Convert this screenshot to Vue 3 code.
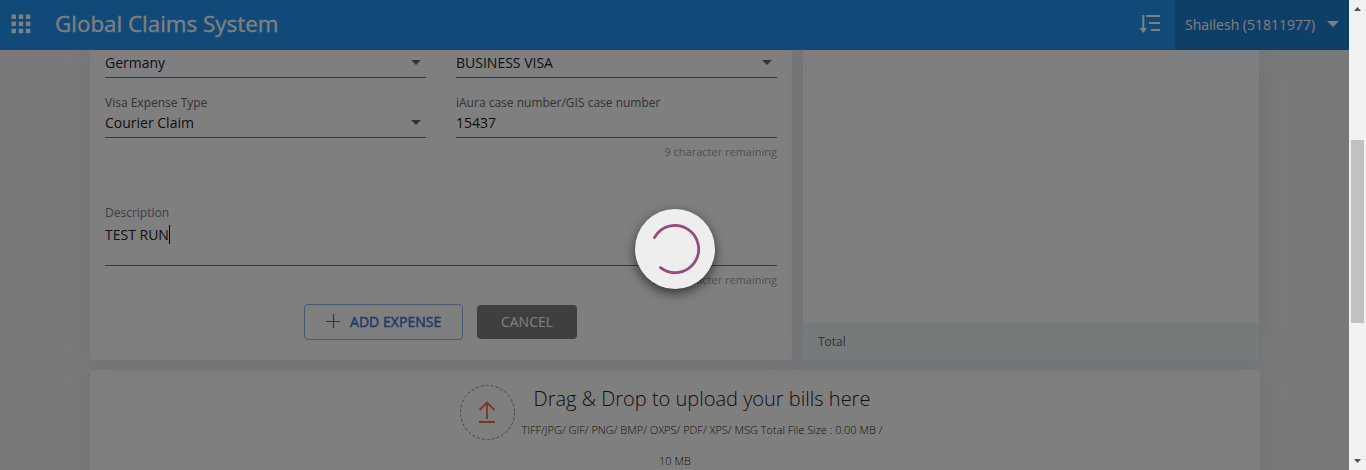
<script setup>
const dots = [0, 1, 2, 3, 4, 5, 6, 7, 8]
</script>

<template>
  <div class="screen">
    <div class="viewport">
      <header class="topbar">
        <svg class="apps" width="20" height="20" viewBox="0 0 20 20">
          <rect v-for="d in dots" :key="d" :x="0.5 + (d % 3) * 7.2" :y="0.4 + Math.floor(d / 3) * 7.2" width="4.500" height="4.500" rx="0.600" fill="#fff" />
        </svg>
        <h1>Global Claims System</h1>
        <svg class="sort" width="24" height="22" viewBox="0 0 24 22">
          <path d="M4.300 1v14" stroke="#fff" stroke-width="2" fill="none" />
          <path d="M0.500 14h7.600L4.300 19z" fill="#fff" />
          <path d="M7 2h14M10 9h11M12 16h9" stroke="#fff" stroke-width="2" fill="none" />
        </svg>
        <div class="user">
          <span>Shailesh (51811977)</span>
          <svg width="12" height="6" viewBox="0 0 12 6"><path d="M0 0h12L6 6z" fill="#fff" /></svg>
        </div>
      </header>

      <main>
        <div class="columns">
          <section class="card form">
            <div class="row first">
              <div class="field"><div class="value">Germany<svg width="10" height="5" viewBox="0 0 10 5"><path d="M0 0h10L5 5z" fill="#666" /></svg></div></div>
              <div class="field"><div class="value">BUSINESS VISA<svg width="10" height="5" viewBox="0 0 10 5"><path d="M0 0h10L5 5z" fill="#666" /></svg></div></div>
            </div>
            <div class="row second">
              <div class="field">
                <label>Visa Expense Type</label>
                <div class="value">Courier Claim<svg width="10" height="5" viewBox="0 0 10 5"><path d="M0 0h10L5 5z" fill="#666" /></svg></div>
              </div>
              <div class="field">
                <label>iAura case number/GIS case number</label>
                <div class="value">15437</div>
                <div class="hint">9 character remaining</div>
              </div>
            </div>
            <div class="description">
              <label>Description</label>
              <div class="textarea"><span>TEST RUN</span><i class="caret"></i></div>
              <div class="hint">992 character remaining</div>
            </div>
            <div class="actions">
              <button class="add">
                <svg width="14" height="14" viewBox="0 0 14 14"><path d="M7.500 0v14M0 7.500h14" stroke="#4573cc" stroke-width="1.200" /></svg>
                <span>ADD EXPENSE</span>
              </button>
              <button class="cancel">CANCEL</button>
            </div>
          </section>
          <section class="card summary">
            <div class="total">Total</div>
          </section>
        </div>

        <section class="card upload">
          <div class="circle">
            <svg class="ring" width="55" height="55" viewBox="0 0 55 55"><circle cx="27.500" cy="27.500" r="27" fill="none" stroke="#8a8a8a" stroke-dasharray="3 2" /></svg>
            <svg class="arrow" width="18" height="22" viewBox="0 0 18 22"><path d="M9 18V2M1.500 9L9 1.500L16.500 9M1 21h16" fill="none" stroke="#f07038" stroke-width="1.800" /></svg>
          </div>
          <div class="drop">
            <h2>Drag &amp; Drop to upload your bills here</h2>
            <p>TIFF/JPG/ GIF/ PNG/ BMP/ OXPS/ PDF/ XPS/ MSG Total File Size : 0.00 MB /</p>
            <p class="limit">10 MB</p>
          </div>
        </section>
      </main>

      <div class="overlay">
        <div class="spinner">
          <svg width="80" height="80" viewBox="0 0 80 80">
            <path d="M19.500 28.500A23.600 23.600 0 1 1 25.500 58.700" fill="none" stroke="#964a7e" stroke-width="2.800" stroke-linecap="round" />
          </svg>
        </div>
      </div>
    </div>

    <aside class="scrollbar">
      <svg class="up" width="7" height="4" viewBox="0 0 7 4"><path d="M0 4L3.500 0L7 4z" fill="#505050" /></svg>
      <div class="thumb"></div>
      <svg class="down" width="7" height="4" viewBox="0 0 7 4"><path d="M0 0h7L3.500 4z" fill="#505050" /></svg>
    </aside>
  </div>
</template>

<style>
body { overflow: hidden; }
</style>

<style scoped>
* { box-sizing: border-box; }
.screen { display: flex; width: 1366px; height: 470px; overflow: hidden; font-family: "Open Sans", sans-serif; color: #222; }
.viewport { position: relative; width: 1349px; height: 470px; overflow: hidden; background: #f3f3f6; }
.topbar { position: relative; z-index: 1; display: flex; align-items: center; height: 50px; padding-left: 11px; background: #2294f0; color: #fff; }
.apps { margin-top: -2px; }
h1 { margin: -2px 0 0 24px; font-size: 22.400px; line-height: 30px; font-weight: 400; -webkit-text-stroke: .3px #fff; }
.sort { margin-left: auto; margin-right: 12px; }
.user { display: flex; align-items: center; justify-content: space-between; width: 174px; height: 50px; padding: 0 10px 2px 10px; background: #1c7fcc; font-size: 14px; }
main { width: 1170px; margin-left: 90px; }
.columns { display: flex; gap: 11px; height: 310px; }
.card { background: #fff; }
.form { width: 702px; padding: 0 15px; border-radius: 0 0 4px 4px; box-shadow: 0 0 30px #dfe2ec; }
.row { display: flex; gap: 30px; }
.first { height: 28px; }
.second { height: 125px; padding-top: 15px; }
.field { width: 321px; }
.value { display: flex; align-items: center; justify-content: space-between; height: 28px; padding-right: 5px; border-bottom: 1px solid #22a83a; font-size: 14px; line-height: 20px; padding-bottom: 2px; }
label { display: block; height: 17px; font-size: 12px; line-height: 19px; color: #666; }
.hint { padding-top: 5px; text-align: right; font-size: 11px; line-height: 17px; color: #a0a0a0; }
.description { height: 101px; }
.description label { color: #767d90; }
.textarea { display: flex; align-items: flex-start; height: 46px; padding-top: 5px; border-bottom: 1px solid #2d8ddd; font-size: 14px; line-height: 20px; }
.caret { width: 1px; height: 19px; background: #000; }
.actions { display: flex; align-items: center; gap: 14px; margin-left: 199px; }
button { font-family: inherit; font-size: 14px; border-radius: 4px; }
.add { display: flex; align-items: center; gap: 10px; width: 159px; height: 36px; padding: 0 0 2px 21px; border: 1px solid #85b5e8; background: transparent; color: #4078cc; font-weight: 400; -webkit-text-stroke: .5px #4078cc; }
.add span { letter-spacing: .050px; }
.cancel { width: 100px; height: 34px; padding: 0 0 2px; border: 0; background: #7f7f7f; color: #fff; }
.summary { display: flex; align-items: flex-end; width: 456px; border-radius: 0 0 4px 4px; overflow: hidden; box-shadow: 0 0 30px #dfe2ec; }
.total { width: 100%; height: 37px; padding-left: 15px; background: #eef5f6; color: #666; font-size: 12px; line-height: 37px; }
.upload { display: flex; height: 130px; margin-top: 10px; padding: 15px 0 0 370px; border-radius: 4px; box-shadow: 0 0 30px #dfe2ec; }
.circle { position: relative; display: flex; align-items: center; justify-content: center; width: 55px; height: 55px; }
.ring { position: absolute; inset: 0; }
.arrow { margin: 0 1px 1px 0; }
.drop { width: 374px; text-align: center; }
h2 { margin: -3px 0 0; font-size: 20px; line-height: 34px; font-weight: 300; }
p { margin: 6px 0 0; font-size: 11px; line-height: 16px; font-weight: 300; color: #222; white-space: nowrap; }
.limit { margin-top: 15px; padding-right: 54px; }
.overlay { position: absolute; inset: 0; z-index: 2; display: flex; align-items: center; justify-content: center; padding-top: 28px; background: rgba(0, 0, 0, .5); }
.spinner { width: 80px; height: 80px; border-radius: 50%; background: #eee; box-shadow: 0 4px 12px rgba(0, 0, 0, .6); }
.scrollbar { display: flex; flex-direction: column; align-items: center; width: 17px; height: 470px; background: #f1f1f1; }
.up { margin-top: 7px; }
.thumb { width: 13px; height: 183px; margin-top: 129px; background: #c1c1c1; }
.down { margin-top: auto; margin-bottom: 7px; }
</style>
